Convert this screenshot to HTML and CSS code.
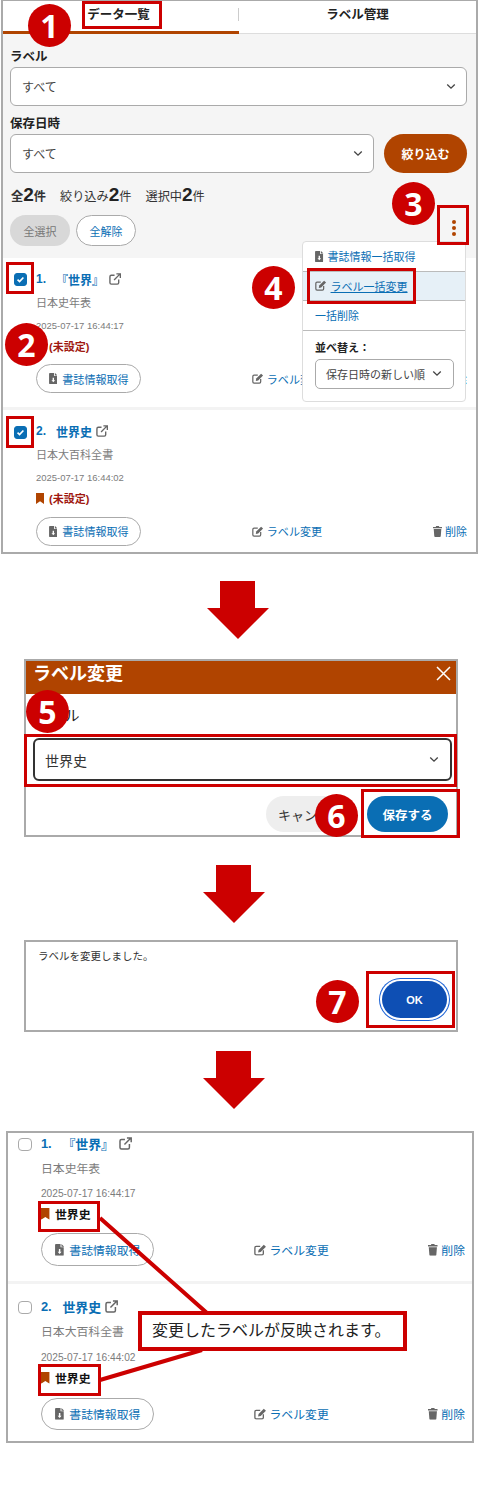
FILE: index.html
```html
<!DOCTYPE html>
<html lang="ja">
<head>
	<meta charset="utf-8">
	<title>ラベル一括変更</title>
	<link rel="stylesheet" href="styles.css">
</head>
<body>
	<svg class="icon-defs" aria-hidden="true">
		<symbol id="i-chevron" viewBox="0 0 12 8"><path d="M1.5 1.5 6 6l4.5-4.5" fill="none" stroke="currentColor" stroke-width="1.6"/></symbol>
		<symbol id="i-file" viewBox="0 0 10 13"><path d="M1 0h5v3.500h3.500V12a1 1 0 0 1-1 1H1a1 1 0 0 1-1-1V1a1 1 0 0 1 1-1zM7 0l3 3H7zM4.200 5.500v3H2.800L5 11l2.200-2.500H5.800v-3z" fill="currentColor" fill-rule="evenodd"/></symbol>
		<symbol id="i-edit" viewBox="0 0 14 13"><path d="M7 2.500H2.500A1.500 1.500 0 0 0 1 4v6.500A1.500 1.500 0 0 0 2.500 12H9a1.500 1.500 0 0 0 1.500-1.500V7" fill="none" stroke="currentColor" stroke-width="1.500"/><path d="M11 .6 13.400 3 7.500 8.900 4.600 9.400 5.100 6.500z" fill="currentColor"/></symbol>
		<symbol id="i-trash" viewBox="0 0 10 12"><path d="M3.500 0h3l.5 1h3v1.400H0V1h3zM.8 3.200h8.400L8.600 11a1 1 0 0 1-1 1H2.400a1 1 0 0 1-1-1z" fill="currentColor"/></symbol>
		<symbol id="i-external" viewBox="0 0 13 13"><path d="M6 2.500H2.500a1.500 1.500 0 0 0-1.500 1.500v6.500A1.500 1.500 0 0 0 2.500 12H9a1.500 1.500 0 0 0 1.500-1.500V7" fill="none" stroke="currentColor" stroke-width="1.500"/><path d="M5.500 7.500 11.500 1.500M8 1h4.300v4.300" fill="none" stroke="currentColor" stroke-width="1.500"/></symbol>
		<symbol id="i-bookmark" viewBox="0 0 8 11"><path d="M0 0h8v11L4 8.300 0 11z" fill="currentColor"/></symbol>
		<symbol id="i-check" viewBox="0 0 12 12"><path d="M2.800 6.200 5 8.300l4.200-4.500" fill="none" stroke="currentColor" stroke-width="1.800"/></symbol>
	</svg>

	<main class="page">

		<section class="panel panel-list">
			<nav class="tabs">
				<div class="tab tab-active">データ一覧</div>
				<div class="tab">ラベル管理</div>
			</nav>

			<div class="filter">
				<div class="field-label">ラベル</div>
				<div class="select">すべて<svg class="chevron"><use href="#i-chevron"/></svg></div>
				<div class="field-label field-label-next">保存日時</div>
				<div class="filter-row">
					<div class="select select-grow">すべて<svg class="chevron"><use href="#i-chevron"/></svg></div>
					<button class="btn-narrow">絞り込む</button>
				</div>
				<div class="counts">
					<span class="count count-total">全<b>2</b>件</span>
					<span class="count">絞り込み<b>2</b>件</span>
					<span class="count">選択中<b>2</b>件</span>
				</div>
				<div class="select-actions">
					<button class="pill pill-off">全選択</button>
					<button class="pill pill-clear">全解除</button>
					<div class="kebab"><i></i><i></i><i></i></div>
				</div>
			</div>

			<article class="item">
				<span class="check check-on"><svg><use href="#i-check"/></svg></span>
				<div class="item-body">
					<div class="item-title"><span class="item-no">1.</span><span>『世界』</span><svg class="ico-ext"><use href="#i-external"/></svg></div>
					<div class="item-source">日本史年表</div>
					<div class="item-date">2025-07-17 16:44:17</div>
					<div class="item-label item-label-none"><svg class="ico-mark"><use href="#i-bookmark"/></svg>(未設定)</div>
					<div class="item-actions">
						<a class="act act-pill"><svg class="ico-file"><use href="#i-file"/></svg>書誌情報取得</a>
						<a class="act"><svg class="ico-edit"><use href="#i-edit"/></svg>ラベル変更</a>
						<a class="act"><svg class="ico-trash"><use href="#i-trash"/></svg>削除</a>
					</div>
				</div>
			</article>

			<article class="item">
				<span class="check check-on"><svg><use href="#i-check"/></svg></span>
				<div class="item-body">
					<div class="item-title"><span class="item-no">2.</span><span>世界史</span><svg class="ico-ext ico-ext-near"><use href="#i-external"/></svg></div>
					<div class="item-source">日本大百科全書</div>
					<div class="item-date">2025-07-17 16:44:02</div>
					<div class="item-label item-label-none"><svg class="ico-mark"><use href="#i-bookmark"/></svg>(未設定)</div>
					<div class="item-actions">
						<a class="act act-pill"><svg class="ico-file"><use href="#i-file"/></svg>書誌情報取得</a>
						<a class="act"><svg class="ico-edit"><use href="#i-edit"/></svg>ラベル変更</a>
						<a class="act"><svg class="ico-trash"><use href="#i-trash"/></svg>削除</a>
					</div>
				</div>
			</article>

			<div class="menu">
				<a class="menu-row"><svg class="ico-file"><use href="#i-file"/></svg>書誌情報一括取得</a>
				<a class="menu-row menu-row-hover"><svg class="ico-edit"><use href="#i-edit"/></svg><u>ラベル一括変更</u></a>
				<a class="menu-row">一括削除</a>
				<div class="menu-sort">
					<div class="menu-sort-title">並べ替え：</div>
					<div class="menu-select">保存日時の新しい順<svg class="chevron"><use href="#i-chevron"/></svg></div>
				</div>
			</div>
		</section>

		<svg class="arrow arrow-first" viewBox="0 0 62 58"><path d="M13 0h35v27h14L31 58 0 27h13z"/></svg>

		<section class="panel dialog">
			<header class="dialog-head">
				<h2>ラベル変更</h2>
				<svg class="dialog-close" viewBox="0 0 15 15"><path d="M1 1l13 13M14 1 1 14" fill="none" stroke="#fff" stroke-width="1.500"/></svg>
			</header>
			<div class="dialog-body">
				<div class="dialog-label">ラベル</div>
				<div class="select select-focus">世界史<svg class="chevron"><use href="#i-chevron"/></svg></div>
				<div class="dialog-actions">
					<button class="btn-cancel">キャンセル</button>
					<button class="btn-save">保存する</button>
				</div>
			</div>
		</section>

		<svg class="arrow arrow-second" viewBox="0 0 62 58"><path d="M13 0h35v27h14L31 58 0 27h13z"/></svg>

		<section class="panel alert">
			<p>ラベルを変更しました。</p>
			<div class="alert-actions"><button class="btn-ok">OK</button></div>
		</section>

		<svg class="arrow arrow-third" viewBox="0 0 62 58"><path d="M13 0h35v27h14L31 58 0 27h13z"/></svg>

		<section class="panel panel-result">
			<article class="item">
				<span class="check"></span>
				<div class="item-body">
					<div class="item-title"><span class="item-no">1.</span><span>『世界』</span><svg class="ico-ext"><use href="#i-external"/></svg></div>
					<div class="item-source">日本史年表</div>
					<div class="item-date">2025-07-17 16:44:17</div>
					<div class="item-label"><svg class="ico-mark"><use href="#i-bookmark"/></svg>世界史</div>
					<div class="item-actions">
						<a class="act act-pill"><svg class="ico-file"><use href="#i-file"/></svg>書誌情報取得</a>
						<a class="act"><svg class="ico-edit"><use href="#i-edit"/></svg>ラベル変更</a>
						<a class="act"><svg class="ico-trash"><use href="#i-trash"/></svg>削除</a>
					</div>
				</div>
			</article>
			<article class="item">
				<span class="check"></span>
				<div class="item-body">
					<div class="item-title"><span class="item-no">2.</span><span>世界史</span><svg class="ico-ext ico-ext-near"><use href="#i-external"/></svg></div>
					<div class="item-source">日本大百科全書</div>
					<div class="item-date">2025-07-17 16:44:02</div>
					<div class="item-label"><svg class="ico-mark"><use href="#i-bookmark"/></svg>世界史</div>
					<div class="item-actions">
						<a class="act act-pill"><svg class="ico-file"><use href="#i-file"/></svg>書誌情報取得</a>
						<a class="act"><svg class="ico-edit"><use href="#i-edit"/></svg>ラベル変更</a>
						<a class="act"><svg class="ico-trash"><use href="#i-trash"/></svg>削除</a>
					</div>
				</div>
			</article>
		</section>

		<!-- annotations drawn over the screenshots -->
		<svg class="leader" viewBox="0 0 481 1492"><path d="M100 1218 207 1313M100 1380 202 1350" fill="none" stroke="#cc0000" stroke-width="4"/></svg>

		<div class="mark mark-tab"></div>
		<div class="mark mark-kebab"></div>
		<div class="mark mark-check1"></div>
		<div class="mark mark-check2"></div>
		<div class="mark mark-bulk"></div>
		<div class="mark mark-select"></div>
		<div class="mark mark-save"></div>
		<div class="mark mark-ok"></div>
		<div class="mark mark-label1"></div>
		<div class="mark mark-label2"></div>

		<div class="callout">変更したラベルが反映されます。</div>

		<div class="badge badge-1">1</div>
		<div class="badge badge-2">2</div>
		<div class="badge badge-3">3</div>
		<div class="badge badge-4">4</div>
		<div class="badge badge-5">5</div>
		<div class="badge badge-6">6</div>
		<div class="badge badge-7">7</div>
	</main>
</body>
</html>
```

FILE: styles.css
```css
*, *:before, *:after {
	box-sizing: border-box;
}
body {
	font-family: "Liberation Sans", "Noto Sans CJK JP", sans-serif;
	font-size: 12px;
	color: #333;
	background: #fff;
	margin: 0;
}
button {
	font-family: inherit;
	border: 0;
	padding: 0;
}
.icon-defs {
	position: absolute;
	width: 0;
	height: 0;
}
.page {
	position: relative;
	width: 481px;
	height: 1492px;
	overflow: hidden;
}
.panel {
	border: 2px solid #aaa;
	background: #fff;
}

/* first screenshot */
.panel-list {
	position: relative;
	width: 477px;
	height: 554px;
	margin-left: 1px;
	border-top-width: 1px;
}
.tabs {
	display: flex;
	height: 33px;
}
.tab {
	position: relative;
	flex: 1;
	text-align: center;
	font-size: 12.500px;
	font-weight: 700;
	line-height: 28px;
	color: #222;
	border-bottom: 1px solid #ddd;
}
.tab-active {
	flex: none;
	width: 236px;
	padding-right: 5px;
	border-bottom: 3px solid #b04400;
}
.tab-active:after {
	content: '';
	position: absolute;
	right: 0;
	top: 7px;
	width: 1px;
	height: 13px;
	background: #ccc;
}
.filter {
	background: #f5f5f5;
	padding: 12px 9px 12px 7px;
}
.field-label {
	height: 20px;
	font-size: 12.500px;
	font-weight: 700;
	line-height: 22px;
	margin-bottom: 1px;
	color: #222;
}
.field-label-next {
	margin-top: 7px;
}
.select {
	display: flex;
	align-items: center;
	justify-content: space-between;
	height: 39px;
	padding: 0 10px 0 11px;
	font-size: 12px;
	color: #444;
	background: #fff;
	border: 1px solid #aaa;
	border-radius: 6px;
}
.chevron {
	flex: none;
	width: 10px;
	height: 7px;
	color: #444;
}
.filter-row {
	display: flex;
	gap: 10px;
}
.select-grow {
	flex: 1;
}
.btn-narrow {
	width: 83px;
	height: 39px;
	font-size: 12px;
	font-weight: 700;
	color: #fff;
	background: #b04400;
	border-radius: 20px;
}
.counts {
	display: flex;
	gap: 14px;
	height: 20px;
	margin-top: 12px;
	padding-left: 1px;
	font-size: 12.200px;
	line-height: 20px;
	color: #333;
}
.count b {
	font-size: 19px;
	color: #222;
}
.count-total {
	font-weight: 700;
}
.select-actions {
	position: relative;
	display: flex;
	gap: 6px;
	margin-top: 10px;
}
.pill {
	width: 60px;
	height: 31px;
	font-size: 11px;
	border-radius: 16px;
}
.pill-off {
	color: #777;
	background: #d8d8d8;
}
.pill-clear {
	color: #0a6eb4;
	background: #fff;
	border: 1px solid #aaa;
}
.kebab {
	display: flex;
	flex-direction: column;
	gap: 2px;
	margin: 5px 11px 0 auto;
}
.kebab i {
	width: 4px;
	height: 4px;
	border-radius: 50%;
	background: #b04400;
}

/* list rows, sized in em so the third screenshot can be a little larger */
.item {
	display: flex;
	gap: 9px;
	padding: 11px 9px 14px 11px;
	background: #fff;
	border-bottom: 3px solid #f3f3f3;
}
.item:last-of-type {
	border-bottom: 0;
	padding-bottom: 0;
}
.check {
	flex: none;
	width: 1.080em;
	height: 1.080em;
	margin-top: .350em;
	background: #fff;
	border: 1px solid #aaa;
	border-radius: 3px;
}
.check-on {
	background: #0a6eb4;
	border-color: #0a6eb4;
	color: #fff;
}
.check svg {
	display: block;
	width: 100%;
	height: 100%;
}
.item-body {
	flex: 1;
	min-width: 0;
}
.item-title {
	display: flex;
	align-items: center;
	height: 1.670em;
	font-weight: 700;
	color: #0a6eb4;
}
.item-no {
	width: 1.670em;
}
.ico-ext {
	width: 1em;
	height: 1em;
	margin-left: .400em;
	color: #666;
}
.ico-ext-near {
	margin-left: .300em;
}
.item-source {
	height: 1.820em;
	margin-top: .360em;
	font-size: .920em;
	line-height: 1.820em;
	color: #7c7c7c;
}
.item-date {
	height: 2.100em;
	margin-top: .300em;
	font-size: .790em;
	line-height: 2.100em;
	color: #7c7c7c;
}
.item-label {
	display: flex;
	align-items: center;
	height: 1.820em;
	font-size: .920em;
	font-weight: 700;
	color: #111;
}
.item-label-none {
	color: #a01810;
}
.ico-mark {
	width: .730em;
	height: 1em;
	margin-right: .450em;
	color: #b04400;
}
.item-actions {
	display: flex;
	align-items: center;
	justify-content: space-between;
	margin-top: .700em;
}
.act {
	display: flex;
	align-items: center;
	font-size: .920em;
	color: #0a6eb4;
}
.act svg {
	color: #666;
	margin-right: .270em;
}
.act-pill {
	justify-content: center;
	width: 9.550em;
	height: 2.640em;
	background: #fff;
	border: 1px solid #aaa;
	border-radius: 1.400em;
}
.act-pill svg {
	margin-right: .450em;
}
.ico-file {
	width: .780em;
	height: 1em;
}
.ico-edit {
	width: 1.050em;
	height: 1em;
}
.ico-trash {
	width: .820em;
	height: 1em;
}

/* dropdown open over the first list row */
.menu {
	position: absolute;
	left: 299px;
	top: 240px;
	width: 164px;
	height: 161px;
	background: #fff;
	border: 1px solid #ddd;
	border-radius: 4px;
}
.menu-row {
	display: flex;
	align-items: center;
	height: 29.500px;
	padding-left: 12px;
	font-size: 11px;
	color: #0a6eb4;
	border-bottom: 1px solid #bbb;
}
.menu-row svg {
	color: #666;
	margin-right: 4px;
}
.menu-row-hover {
	background: #e6f0f7;
}
.menu-sort {
	padding: 7px 12px 0;
}
.menu-sort-title {
	font-size: 11px;
	font-weight: 700;
	line-height: 20px;
	color: #222;
}
.menu-select {
	display: flex;
	align-items: center;
	justify-content: space-between;
	width: 139px;
	height: 30px;
	margin-top: 1px;
	padding: 0 11px 0 10px;
	font-size: 11px;
	color: #444;
	border: 1px solid #aaa;
	border-radius: 5px;
}

.arrow {
	display: block;
	width: 62px;
	height: 58px;
	fill: #cc0000;
}
.arrow-first {
	margin: 27px 0 0 207px;
}
.arrow-second {
	margin: 28px 0 0 203px;
}
.arrow-third {
	margin: 19px 0 0 203px;
}

/* label change dialog */
.dialog {
	width: 434px;
	height: 178px;
	margin: 20px 0 0 24px;
}
.dialog-head {
	display: flex;
	align-items: center;
	justify-content: space-between;
	height: 33px;
	padding: 0 5px 8px 7px;
	background: #b04400;
}
.dialog-head h2 {
	margin: 0;
	font-size: 18px;
	line-height: 20px;
	font-weight: 700;
	color: #fff;
}
.dialog-close {
	width: 15px;
	height: 15px;
}
.dialog-body {
	padding: 12px 4px 0 7px;
}
.dialog-label {
	height: 20px;
	padding-left: 3px;
	font-size: 14.500px;
	line-height: 20px;
	color: #222;
}
.select-focus {
	height: 43px;
	margin-top: 12px;
	padding-left: 10px;
	font-size: 14px;
	color: #333;
	border: 2px solid #333;
}
.select-focus .chevron {
	margin-right: 1px;
}
.dialog-actions {
	display: flex;
	justify-content: flex-end;
	gap: 12px;
	margin: 15px 4px 0 0;
}
.btn-cancel {
	width: 89px;
	height: 36px;
	font-size: 13px;
	color: #333;
	background: #eee;
	border-radius: 18px;
}
.btn-save {
	width: 81px;
	height: 36px;
	font-size: 12.500px;
	font-weight: 700;
	color: #fff;
	background: #0a6eb4;
	border-radius: 18px;
}

/* done message */
.alert {
	width: 434px;
	height: 92px;
	margin: 17px 0 0 24px;
}
.alert p {
	margin: 5px 0 0 12px;
	font-size: 10.500px;
	line-height: 18px;
	color: #333;
}
.alert-actions {
	display: flex;
	justify-content: flex-end;
	margin: 16px 9px 0 0;
}
.btn-ok {
	width: 65px;
	height: 37px;
	font-size: 11px;
	font-weight: 700;
	color: #fff;
	background: #0e4fb4;
	border-radius: 19px;
	box-shadow: 0 0 0 2px #fff, 0 0 0 3px #1a62d6;
}

/* result screenshot */
.panel-result {
	width: 468px;
	height: 312px;
	margin: 22px 0 0 6px;
	font-size: 12.900px;
}
.panel-result .item {
	padding: 0 7px 15px 10px;
}
.panel-result .item + .item {
	padding: 12px 7px 0 10px;
}
.panel-result .check {
	border-radius: 4px;
}
.panel-result .item-label {
	margin-top: -2px;
}
.panel-result .item + .item .item-label {
	margin-top: -1px;
}
.panel-result .act-pill {
	height: 2.750em;
}

/* annotations */
.leader {
	position: absolute;
	left: 0;
	top: 0;
	width: 481px;
	height: 1492px;
}
.mark {
	position: absolute;
	border: 3px solid #cc0000;
}
.mark-tab { left: 82px; top: 1px; width: 80px; height: 28px; }
.mark-kebab { left: 437px; top: 205px; width: 32px; height: 40px; }
.mark-check1 { left: 6px; top: 262px; width: 28px; height: 32px; }
.mark-check2 { left: 6px; top: 416px; width: 28px; height: 32px; }
.mark-bulk { left: 307px; top: 268px; width: 109px; height: 36px; }
.mark-select { left: 24px; top: 734px; width: 433px; height: 53px; }
.mark-save { left: 361px; top: 789px; width: 99px; height: 49px; }
.mark-ok { left: 366px; top: 971px; width: 89px; height: 57px; }
.mark-label1 { left: 38px; top: 1201px; width: 62px; height: 31px; }
.mark-label2 { left: 38px; top: 1364px; width: 63px; height: 32px; }
.callout {
	position: absolute;
	left: 138px;
	top: 1311px;
	width: 269px;
	height: 40px;
	padding-left: 10px;
	font-size: 16px;
	line-height: 32px;
	white-space: nowrap;
	color: #222;
	background: #fff;
	border: 4px solid #cc0000;
}
.badge {
	position: absolute;
	width: 43px;
	height: 43px;
	font-family: "Open Sans", sans-serif;
	font-size: 32px;
	font-weight: 700;
	line-height: 43px;
	text-align: center;
	color: #fff;
	background: #cc0000;
	border-radius: 50%;
}
.badge-1 { left: 28px; top: 4px; }
.badge-2 { left: 5px; top: 323px; }
.badge-3 { left: 392px; top: 182px; }
.badge-4 { left: 252px; top: 266px; }
.badge-5 { left: 26px; top: 690px; }
.badge-6 { left: 315px; top: 794px; }
.badge-7 { left: 316px; top: 980px; }
```
